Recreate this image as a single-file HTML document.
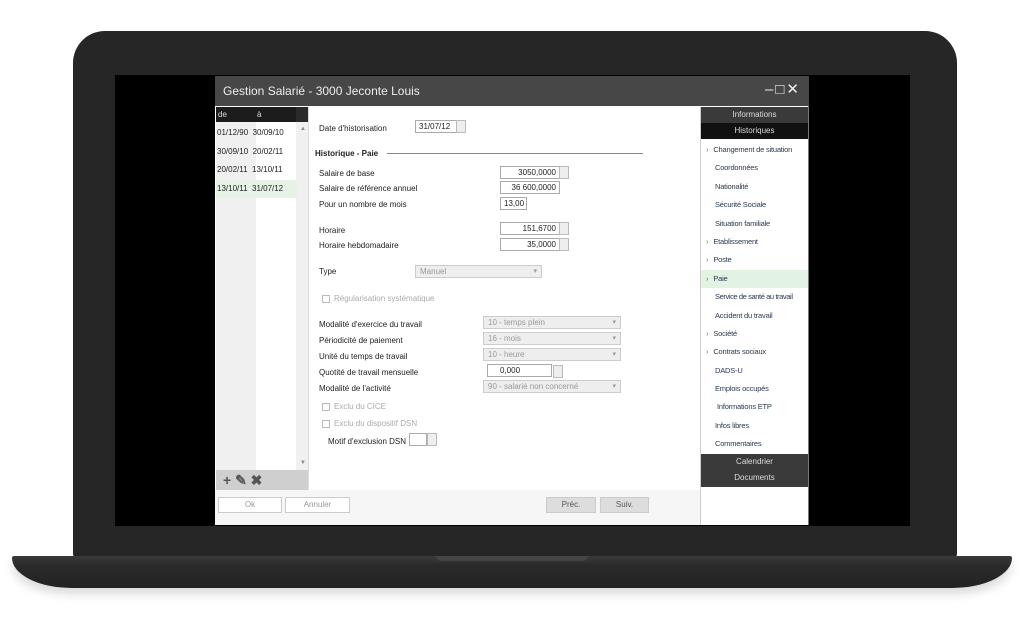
<!DOCTYPE html>
<html><head><meta charset="utf-8"><style>
*{margin:0;padding:0;box-sizing:border-box}
body{width:1024px;height:617px;background:#fff;position:relative;overflow:hidden;font-family:"Liberation Sans",sans-serif;font-size:8px;color:#222}
.a{position:absolute;white-space:nowrap}
.lid{left:73px;top:31px;width:884px;height:527px;background:#262626;border-radius:32px 32px 4px 4px}
.scr{left:115px;top:75px;width:795px;height:451px;background:#000}
.base{left:12px;top:556px;width:1000px;height:32px;background:linear-gradient(#3a3a3a,#2a2a2a 30%,#222);border-radius:2px 2px 60px 60px/2px 2px 30px 30px;box-shadow:0 6px 10px rgba(0,0,0,.15)}
.notch{left:436px;top:556px;width:152px;height:5px;background:#444;border-radius:0 0 5px 5px}
.win{left:215px;top:76px;width:594px;height:449px;background:#fff}
.tb{left:0;top:0;width:594px;height:30px;background:#474747;color:#eee;font-size:12px;padding:8px 8px}
.lbl{color:#222}
.in{background:#fff;border:1px solid #aaa;height:13px;text-align:right;padding:1px 3px;font-size:8px}
.sp{width:10px;height:13px;border:1px solid #bbb;background:#eee}
.sel{background:#eee;border:1px solid #ccc;height:13px;color:#999;padding:1px 4px;font-size:8px}
.sel:after{content:"▾";position:absolute;right:4px;top:1px;color:#999;font-size:7px}
.nav div{height:18.4px;line-height:18.4px;padding-left:14px;color:#2a3a50;font-size:7.5px;letter-spacing:-0.2px;white-space:nowrap}
.g{color:#3a8a3a;margin-left:-9px;margin-right:5px}
.btn{border:1px solid #ccc;height:16px;text-align:center;line-height:14px;color:#999;font-size:8px}
.cb{display:inline-block;width:8px;height:8px;border:1px solid #bbb;vertical-align:middle;margin-right:4px}
</style></head><body>
<div class="a lid"></div>
<div class="a base"></div>
<div class="a notch"></div>
<div class="a scr"></div>
<div class="a win">
 <div class="a tb">Gestion Salarié - 3000 Jeconte Louis<span style="position:absolute;right:8px;top:4px;font-size:15px;letter-spacing:2px">–□✕</span></div>
 <div class="a" style="left:1px;top:31px;width:92px;height:383px;background:#f0f0f0"></div>
 <div class="a" style="left:41px;top:31px;width:40px;height:383px;background:#fff"></div>
 <div class="a" style="left:1px;top:31px;width:80px;height:15px;background:#1c1c1c;color:#ddd;font-size:8px;padding:3px 2px">de<span style="position:absolute;left:41px">à</span></div>
 <div class="a" style="left:81px;top:31px;width:12px;height:15px;background:#2a2a2a"></div>
 <div class="a" style="left:2px;top:48px;line-height:18.5px;font-size:8px;width:80px">
  <div>01/12/90 &nbsp;30/09/10</div><div>30/09/10 &nbsp;20/02/11</div><div>20/02/11 &nbsp;13/10/11</div><div style="background:#e6f2e6;margin-left:-1px;padding-left:1px">13/10/11 &nbsp;31/07/12</div>
 </div>
 <div class="a" style="left:85px;top:50px;color:#888;font-size:6px">▲</div>
 <div class="a" style="left:85px;top:384px;color:#888;font-size:6px">▼</div>
 <div class="a" style="left:1px;top:394px;width:92px;height:20px;background:#cfcfcf;color:#555;font-size:14px;font-weight:bold;padding:0 7px;line-height:20px">+ ✎ ✖</div>
 <div class="a" style="left:93px;top:31px;width:1px;height:383px;background:#ddd"></div>
 <div class="a lbl" style="left:104px;top:48px">Date d'historisation</div>
 <div class="a in" style="left:200px;top:44px;width:42px;text-align:left">31/07/12</div><div class="a sp" style="left:241px;top:44px"></div>
 <div class="a" style="left:100px;top:73px;font-weight:bold">Historique - Paie</div>
 <div class="a" style="left:172px;top:77px;width:256px;height:1px;background:#888"></div>
 <div class="a lbl" style="left:104px;top:93px">Salaire de base</div>
 <div class="a in" style="left:285px;top:90px;width:60px">3050,0000</div><div class="a sp" style="left:344px;top:90px"></div>
 <div class="a lbl" style="left:104px;top:108px">Salaire de référence annuel</div>
 <div class="a in" style="left:285px;top:105px;width:60px">36 600,0000</div>
 <div class="a lbl" style="left:104px;top:124px">Pour un nombre de mois</div>
 <div class="a in" style="left:285px;top:121px;width:27px">13,00</div>
 <div class="a lbl" style="left:104px;top:150px">Horaire</div>
 <div class="a in" style="left:285px;top:146px;width:60px">151,6700</div><div class="a sp" style="left:344px;top:146px"></div>
 <div class="a lbl" style="left:104px;top:165px">Horaire hebdomadaire</div>
 <div class="a in" style="left:285px;top:162px;width:60px">35,0000</div><div class="a sp" style="left:344px;top:162px"></div>
 <div class="a lbl" style="left:104px;top:191px">Type</div>
 <div class="a sel" style="left:200px;top:189px;width:127px">Manuel</div>
 <div class="a" style="left:107px;top:218px;color:#aaa"><span class="cb"></span>Régularisation systématique</div>
 <div class="a lbl" style="left:104px;top:244px">Modalité d'exercice du travail</div>
 <div class="a sel" style="left:268px;top:240px;width:138px">10 - temps plein</div>
 <div class="a lbl" style="left:104px;top:260px">Périodicité de paiement</div>
 <div class="a sel" style="left:268px;top:256px;width:138px">16 - mois</div>
 <div class="a lbl" style="left:104px;top:276px">Unité du temps de travail</div>
 <div class="a sel" style="left:268px;top:272px;width:138px">10 - heure</div>
 <div class="a lbl" style="left:104px;top:292px">Quotité de travail mensuelle</div>
 <div class="a in" style="left:272px;top:288px;width:65px;text-align:left;padding-left:12px">0,000</div><div class="a sp" style="left:338px;top:289px"></div>
 <div class="a lbl" style="left:104px;top:308px">Modalité de l'activité</div>
 <div class="a sel" style="left:268px;top:304px;width:138px">90 - salarié non concerné</div>
 <div class="a" style="left:107px;top:326px;color:#aaa"><span class="cb"></span>Exclu du CICE</div>
 <div class="a" style="left:107px;top:343px;color:#aaa"><span class="cb"></span>Exclu du dispositif DSN</div>
 <div class="a lbl" style="left:113px;top:361px">Motif d'exclusion DSN</div>
 <div class="a in" style="left:194px;top:357px;width:18px"></div><div class="a sp" style="left:212px;top:357px"></div>
 <div class="a" style="left:0;top:414px;width:485px;height:35px;background:#f6f6f6"></div>
 <div class="a btn" style="left:3px;top:421px;width:64px;background:#fff">Ok</div>
 <div class="a btn" style="left:70px;top:421px;width:65px;background:#fff">Annuler</div>
 <div class="a btn" style="left:331px;top:421px;width:50px;background:#ddd;color:#555">Préc.</div>
 <div class="a btn" style="left:385px;top:421px;width:49px;background:#ddd;color:#555">Suiv.</div>
 <div class="a" style="left:485px;top:31px;width:1px;height:418px;background:#ccc"></div>
 <div class="a" style="left:486px;top:31px;width:107px;height:16px;background:#3a3a3a;color:#ddd;text-align:center;line-height:16px">Informations</div>
 <div class="a" style="left:486px;top:47px;width:107px;height:16px;background:#111;color:#ddd;text-align:center;line-height:16px">Historiques</div>
 <div class="a nav" style="left:486px;top:65px;width:107px;overflow:hidden">
  <div><span class="g">›</span>Changement de situation</div><div>Coordonnées</div><div>Nationalité</div><div>Sécurité Sociale</div><div>Situation familiale</div><div><span class="g">›</span>Etablissement</div><div><span class="g">›</span>Poste</div><div style="background:#e3f3e3"><span class="g">›</span>Paie</div><div style="letter-spacing:-0.4px">Service de santé au travail</div><div>Accident du travail</div><div><span class="g">›</span>Société</div><div><span class="g">›</span>Contrats sociaux</div><div>DADS-U</div><div>Emplois occupés</div><div style="padding-left:16px">Informations ETP</div><div>Infos libres</div><div>Commentaires</div>
 </div>
 <div class="a" style="left:486px;top:378px;width:107px;height:33px;background:#3a3a3a;color:#ddd;text-align:center;line-height:16px">Calendrier<br>Documents</div>
 <div class="a" style="left:593px;top:30px;width:1px;height:419px;background:#777"></div>
</div>
</body></html>
